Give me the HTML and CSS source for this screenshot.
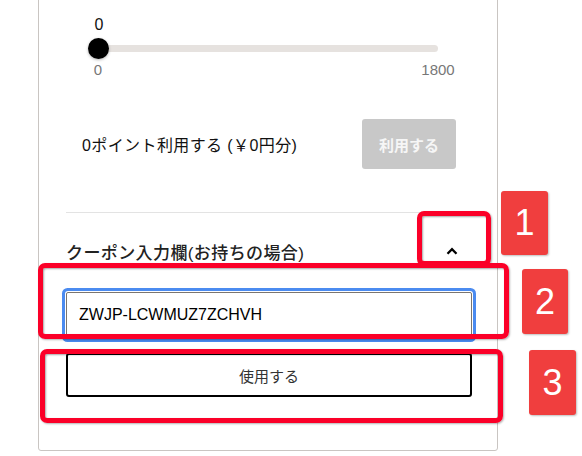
FILE: index.html
```html
<!DOCTYPE html>
<html lang="ja">
<head>
    <meta charset="UTF-8">
    <meta name="viewport" content="width=device-width, initial-scale=1.0">
    <title>ポイント・クーポン</title>
    <link rel="stylesheet" href="styles.css">
</head>
<body>
    <div class="page">
        <div class="card">
            <div class="slider">
                <div class="slider-value">0</div>
                <div class="slider-track">
                    <div class="track-bar"></div>
                    <div class="thumb"></div>
                </div>
                <div class="slider-labels">
                    <span class="tick">0</span>
                    <span class="tick">1800</span>
                </div>
            </div>

            <div class="points-row">
                <span class="points-text">0ポイント利用する (￥0円分)</span>
                <button class="points-btn">利用する</button>
            </div>

            <div class="coupon">
                <div class="coupon-head">
                    <h3>クーポン入力欄(お持ちの場合)</h3>
                    <button class="toggle">
                        <svg width="12" height="8" viewBox="0 0 12 8">
                            <polyline points="1.5,6.8 6,2.2 10.5,6.8" fill="none" stroke="#000" stroke-width="2.3"/>
                        </svg>
                    </button>
                </div>
                <input type="text" class="coupon-input" value="ZWJP-LCWMUZ7ZCHVH">
                <button class="use-btn">使用する</button>
            </div>
        </div>

        <!-- annotations -->
        <div class="mark mark-1"></div>
        <div class="mark mark-2"></div>
        <div class="mark mark-3"></div>
        <div class="badge badge-1">1</div>
        <div class="badge badge-2">2</div>
        <div class="badge badge-3">3</div>
    </div>
</body>
</html>
```

FILE: styles.css
```css
body {
    margin: 0;
    background: #fff;
    font-family: "Liberation Sans", "Noto Sans CJK JP", sans-serif;
    color: #111;
}
.page {
    position: relative;
    width: 582px;
    height: 456px;
    overflow: hidden;
}
.card {
    box-sizing: border-box;
    width: 460px;
    margin: -20px 0 0 38px;
    padding: 34px 0 53px;
    border: 1px solid #c9c5c2;
    border-radius: 3px;
}

/* slider */
.slider {
    padding: 0 48px 0 49px;
}
.slider-value {
    width: 22px;
    text-align: center;
    font-size: 16px;
    line-height: 20px;
}
.slider-track {
    position: relative;
    height: 21px;
    margin-top: 3px;
}
.track-bar {
    position: absolute;
    left: 6px;
    right: 11px;
    top: 7px;
    height: 7px;
    border-radius: 4px;
    background: #e6e2df;
}
.thumb {
    position: absolute;
    left: 0;
    top: 0;
    width: 21px;
    height: 21px;
    border-radius: 50%;
    background: #000;
    box-shadow: 0 1px 3px rgba(0, 0, 0, 0.3);
}
.slider-labels {
    display: flex;
    justify-content: space-between;
    margin-top: 2px;
    padding: 0 11px 0 10px;
    font-size: 15px;
    line-height: 18px;
    color: #777;
}
.tick {
    display: flex;
    justify-content: center;
    width: 0;
    white-space: nowrap;
}

/* points */
.points-row {
    display: flex;
    align-items: center;
    justify-content: space-between;
    margin-top: 40px;
    padding: 0 41px 0 43px;
}
.points-text {
    font-size: 16px;
    letter-spacing: 0.4px;
}
.points-btn {
    width: 94px;
    height: 50px;
    border: none;
    border-radius: 3px;
    background: #c8c8c8;
    color: #f6f6f6;
    font-family: inherit;
    font-size: 15px;
    font-weight: bold;
}

/* coupon */
.coupon {
    margin: 43px 25px 0 27px;
    border-top: 1px solid #e3e3e3;
}
.coupon-head {
    display: flex;
    align-items: center;
    justify-content: space-between;
    height: 40px;
    margin-top: 18px;
}
.coupon-head h3 {
    margin: 0;
    font-size: 17px;
    font-weight: 500;
    letter-spacing: 0.4px;
    color: #222;
}
.toggle {
    display: flex;
    align-items: center;
    justify-content: center;
    width: 40px;
    height: 40px;
    padding: 0;
    border: none;
    background: none;
}
.coupon-input {
    display: block;
    box-sizing: border-box;
    width: 100%;
    height: 46px;
    margin-top: 21px;
    padding: 0 12px;
    border: 1px solid #7a7570;
    border-radius: 2px;
    box-shadow: 0 0 0 1px #fff, 0 0 0 4px #4b8bf0;
    outline: none;
    font-family: "Liberation Sans", sans-serif;
    font-size: 16px;
    color: #000;
}
.use-btn {
    display: block;
    box-sizing: border-box;
    width: 100%;
    height: 44px;
    margin-top: 15px;
    border: 2px solid #000;
    border-radius: 3px;
    background: #fff;
    color: #333;
    font-family: inherit;
    font-size: 15px;
}

/* annotations */
.mark {
    position: absolute;
    box-sizing: border-box;
    border: 5px solid #fb0028;
    border-radius: 7px;
    box-shadow: 1px 1px 2px rgba(0, 0, 0, 0.3), inset 1px 1px 2px rgba(0, 0, 0, 0.35);
}
.mark-1 { left: 417px; top: 211px; width: 74px; height: 55px; }
.mark-2 { left: 38px; top: 263px; width: 471px; height: 76px; }
.mark-3 { left: 40px; top: 349px; width: 463px; height: 74px; }

.badge {
    position: absolute;
    width: 47px;
    height: 65px;
    border-radius: 3px;
    background: #f03e3e;
    box-shadow: 1px 1px 2px rgba(0, 0, 0, 0.25);
    color: #fff;
    font-size: 36px;
    line-height: 65px;
    text-align: center;
}
.badge-1 { left: 501px; top: 191px; height: 64px; line-height: 64px; }
.badge-2 { left: 522px; top: 269px; width: 46px; }
.badge-3 { left: 529px; top: 350px; }
```
